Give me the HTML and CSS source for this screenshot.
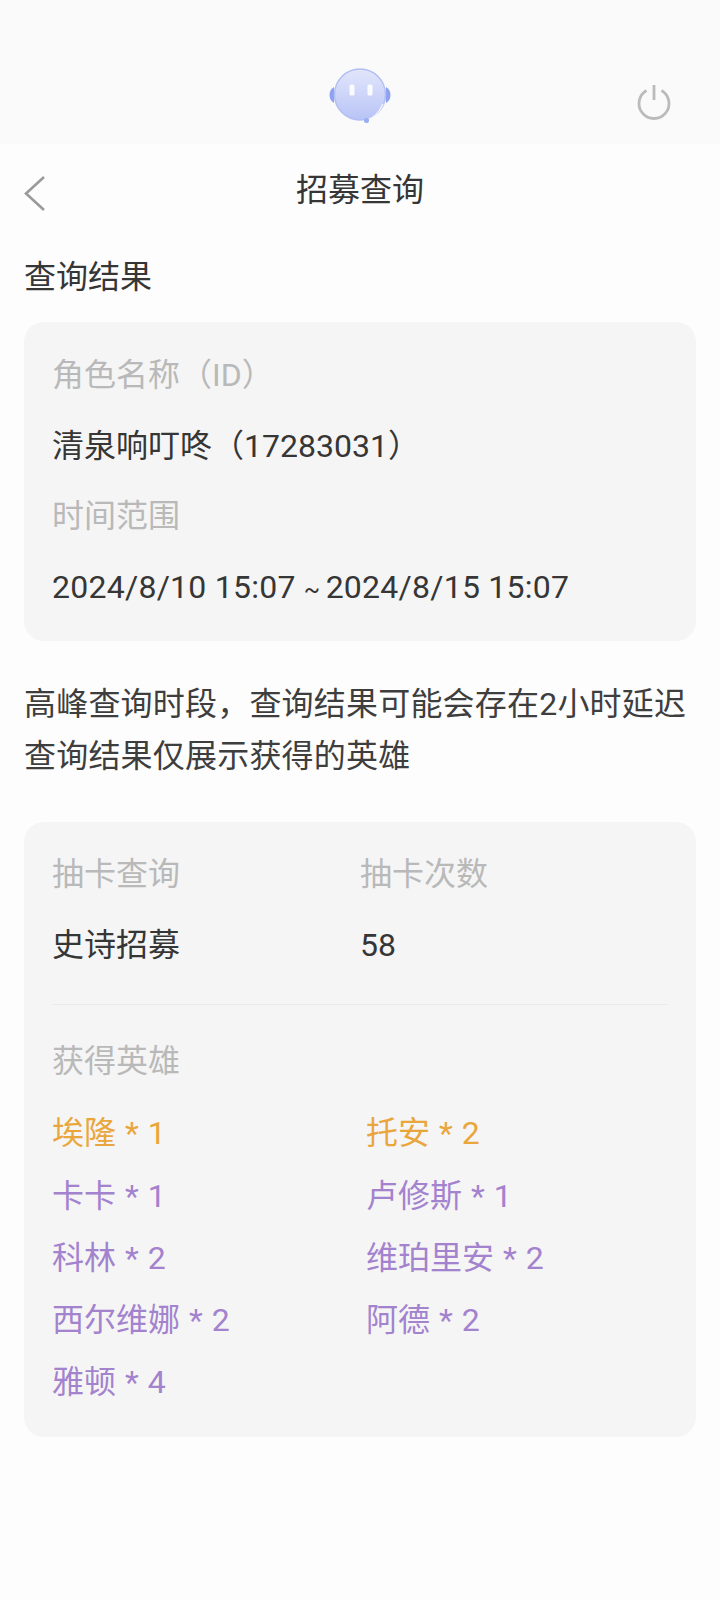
FILE: index.html
```html
<!DOCTYPE html>
<html lang="zh-CN">
<head>
<meta charset="utf-8">
<title>招募查询</title>
<link rel="stylesheet" href="styles.css">
</head>
<body>
<header class="top">
  <svg class="mascot" width="64" height="56" viewBox="0 0 64 56">
    <defs>
      <linearGradient id="face" x1="0" y1="0" x2="0" y2="1">
        <stop offset="0" stop-color="#e2e6fb"/>
        <stop offset="1" stop-color="#b9c4f6"/>
      </linearGradient>
    </defs>
    <path d="M6 20 C0 23 0 33 6 36Z" fill="#8fa2f0"/>
    <path d="M58 20 C64 23 64 33 58 36Z" fill="#8fa2f0"/>
    <circle cx="32" cy="27.5" r="25.5" fill="url(#face)" stroke="#b3bff4" stroke-width="1.5"/>
    <rect x="21.5" y="17.5" width="5" height="11" rx="1.5" fill="#fafbff"/>
    <rect x="39.5" y="17.5" width="5" height="11" rx="1.5" fill="#fafbff"/>
    <path d="M55 37 C51 46 46 51 39 53" fill="none" stroke="#f2f4fe" stroke-width="1.5"/>
    <rect x="36" y="51" width="5" height="5" rx="2" fill="#9caef2"/>
  </svg>
  <svg class="power" width="36" height="36" viewBox="0 0 36 36">
    <path d="M10.5 6.5 A15 15 0 1 0 25.5 6.5" fill="none" stroke="#bbb" stroke-width="2.8"/>
    <path d="M18 1 V16" fill="none" stroke="#bbb" stroke-width="2.8"/>
  </svg>
</header>
<main class="page">
  <div class="nav">
    <svg class="back" width="24" height="36" viewBox="0 0 24 36">
      <path d="M20 1 L2 17.5 L20 34" fill="none" stroke="#9a9a9a" stroke-width="2.6"/>
    </svg>
    <h1 class="title">招募查询</h1>
  </div>
  <h2 class="section">查询结果</h2>
  <section class="card info">
    <div class="row muted">角色名称（ID）</div>
    <div class="row">清泉响叮咚（17283031）</div>
    <div class="row muted">时间范围</div>
    <div class="row date">2024/8/10 15:07 <span class="tilde">~</span> 2024/8/15 15:07</div>
  </section>
  <p class="note">高峰查询时段，查询结果可能会存在2小时延迟<br>查询结果仅展示获得的英雄</p>
  <section class="card result">
    <div class="stats">
      <div class="stat">
        <div class="row muted">抽卡查询</div>
        <div class="row">史诗招募</div>
      </div>
      <div class="stat">
        <div class="row muted">抽卡次数</div>
        <div class="row">58</div>
      </div>
    </div>
    <div class="divider"></div>
    <div class="row muted">获得英雄</div>
    <ul class="heroes">
      <li class="gold">埃隆 * 1</li>
      <li class="gold">托安 * 2</li>
      <li class="purple">卡卡 * 1</li>
      <li class="purple">卢修斯 * 1</li>
      <li class="purple">科林 * 2</li>
      <li class="purple">维珀里安 * 2</li>
      <li class="purple">西尔维娜 * 2</li>
      <li class="purple">阿德 * 2</li>
      <li class="purple">雅顿 * 4</li>
    </ul>
  </section>
</main>
</body>
</html>
```
FILE: styles.css
```css
* { box-sizing: border-box; }
html, body { margin: 0; padding: 0; }
body {
  width: 720px;
  height: 1600px;
  overflow: hidden;
  background: #fdfdfd;
  color: #363636;
  font-family: Roboto, "Noto Sans CJK SC", sans-serif;
  font-size: 32px;
}
.top {
  height: 144px;
  background: #fafafa;
  display: flex;
  justify-content: center;
  position: relative;
}
.mascot { margin-top: 67px; filter: blur(0.5px); }
.power { position: absolute; left: 636px; top: 84px; }
.page { padding: 0 24px; }
.nav {
  height: 88px;
  display: flex;
  align-items: center;
  justify-content: center;
  position: relative;
}
.back { position: absolute; left: 0; top: 32px; }
.title { margin: 0; padding-top: 4px; font-size: 32px; font-weight: 400; line-height: 44px; }
.section { margin: 23px 0 0; font-size: 32px; font-weight: 400; line-height: 44px; height: 67px; }
.card { background: #f5f5f5; border-radius: 20px; padding: 18px 28px 0; }
.info { height: 319px; }
.row { height: 70.6px; line-height: 70px; white-space: nowrap; }
.date { letter-spacing: 0.25px; }
.tilde { font-size: 24px; margin-right: -3px; }
.muted { color: #b9b9b9; }
.note { margin: 37px 0 0; line-height: 52px; color: #3e3e3e; letter-spacing: 0.2px; }
.result { margin-top: 40px; height: 615px; padding-top: 17px; }
.stats { display: grid; grid-template-columns: 308px 1fr; }
.divider { height: 1px; background: #ebebeb; margin: 24px 0 21px; }
.heroes {
  list-style: none;
  margin: 5.5px 0 0;
  padding: 0;
  display: grid;
  grid-template-columns: 314px 1fr;
  grid-auto-rows: 62.3px;
  word-spacing: 1px;
}
.heroes li { line-height: 62px; white-space: nowrap; }
.gold { color: #e9a63c; }
.purple { color: #a382ce; }
```
